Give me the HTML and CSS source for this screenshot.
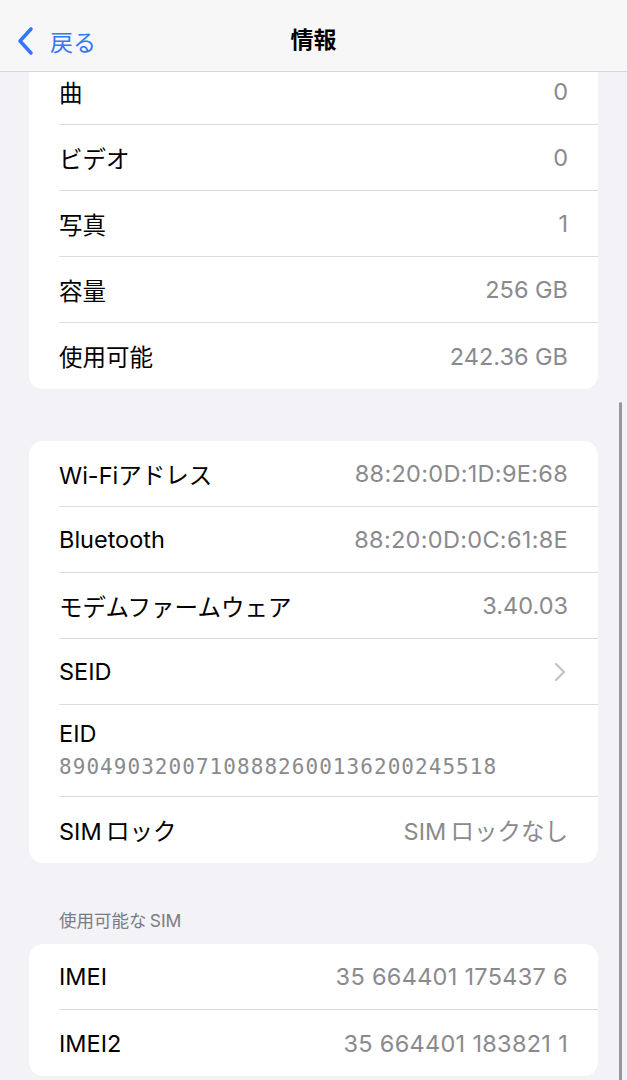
FILE: index.html
```html
<!DOCTYPE html>
<html lang="ja">
<head>
  <meta charset="UTF-8">
  <title>情報</title>
  <link rel="stylesheet" href="styles.css">
</head>
<body>

  <div class="navbar">
    <a class="back" href="#">
      <svg width="22" height="30" viewBox="0 0 22 30"><path d="M16 3 L5 15 L16 27" fill="none" stroke="#3478f6" stroke-width="3.6" stroke-linecap="round" stroke-linejoin="round"/></svg>
      <span>戻る</span>
    </a>
    <h1>情報</h1>
  </div>

  <div class="scrollbar"></div>

  <main class="content">
    <section class="group">
      <div class="row"><span class="label">曲</span><span class="value">0</span></div>
      <div class="row"><span class="label">ビデオ</span><span class="value">0</span></div>
      <div class="row"><span class="label">写真</span><span class="value">1</span></div>
      <div class="row"><span class="label">容量</span><span class="value">256 GB</span></div>
      <div class="row"><span class="label">使用可能</span><span class="value">242.36 GB</span></div>
    </section>

    <section class="group">
      <div class="row"><span class="label">Wi-Fiアドレス</span><span class="value wide">88:20:0D:1D:9E:68</span></div>
      <div class="row"><span class="label">Bluetooth</span><span class="value wide">88:20:0D:0C:61:8E</span></div>
      <div class="row"><span class="label">モデムファームウェア</span><span class="value">3.40.03</span></div>
      <div class="row"><span class="label">SEID</span>
        <svg class="chevron" width="12" height="20" viewBox="0 0 12 20"><path d="M2 2 L10 10 L2 18" fill="none" stroke="#c4c4c7" stroke-width="2.2" stroke-linecap="round" stroke-linejoin="round"/></svg>
      </div>
      <div class="row tall">
        <span class="label">EID</span>
        <span class="eid">89049032007108882600136200245518</span>
      </div>
      <div class="row"><span class="label">SIM&#8201;ロック</span><span class="value">SIM&#8201;ロックなし</span></div>
    </section>

    <h2 class="section-title">使用可能な&#8201;SIM</h2>
    <section class="group">
      <div class="row"><span class="label">IMEI</span><span class="value wide">35 664401 175437 6</span></div>
      <div class="row"><span class="label">IMEI2</span><span class="value wide">35 664401 183821 1</span></div>
    </section>
  </main>

</body>
</html>
```

FILE: styles.css
```css
body {
  margin: 0;
  background: #f2f2f7;
  font-family: Inter, "Noto Sans CJK JP", sans-serif;
  color: #000;
}

.navbar {
  position: fixed;
  top: 0;
  left: 0;
  right: 0;
  height: 72px;
  padding-top: 8px;
  box-sizing: border-box;
  background: #f7f7f7;
  border-bottom: 1px solid #d6d6d8;
  display: flex;
  align-items: center;
  justify-content: center;
  z-index: 2;
}
.navbar h1 { margin: 0; font-size: 23px; font-weight: 700; line-height: 32px; }
.back {
  position: absolute;
  left: 15px;
  top: 25px;
  height: 32px;
  display: flex;
  align-items: center;
  gap: 13px;
  color: #3478f6;
  text-decoration: none;
  font-size: 23px;
}

.scrollbar {
  position: fixed;
  top: 402px;
  right: 5px;
  width: 3px;
  height: 700px;
  border-radius: 2px;
  background: #98989c;
  z-index: 3;
}

.content { padding: 59px 29px 0; }

.group {
  background: #fff;
  border-radius: 14px;
  margin-bottom: 52px;
  overflow: hidden;
}
.row {
  display: flex;
  align-items: center;
  justify-content: space-between;
  height: 66px;
  margin-left: 30px;
  padding-right: 30px;
  border-bottom: 1px solid #dcdcde;
  box-sizing: border-box;
  font-size: 23.5px;
}
.row:last-child { border-bottom: none; }
.row.tall {
  height: 92px;
  flex-direction: column;
  align-items: flex-start;
  justify-content: flex-start;
  padding-top: 14px;
  gap: 3px;
  line-height: 30px;
}
.value { color: #8a8a8e; }
.value.wide { letter-spacing: 0.3px; }
.eid {
  color: #8a8a8e;
  font-family: "DejaVu Sans Mono", monospace;
  font-size: 21px;
  letter-spacing: 1.05px;
}
.chevron { margin-right: 2px; }

.section-title {
  margin: -8px 0 12px 30px;
  font-size: 17.5px;
  font-weight: 400;
  color: #7b7b80;
}
```
